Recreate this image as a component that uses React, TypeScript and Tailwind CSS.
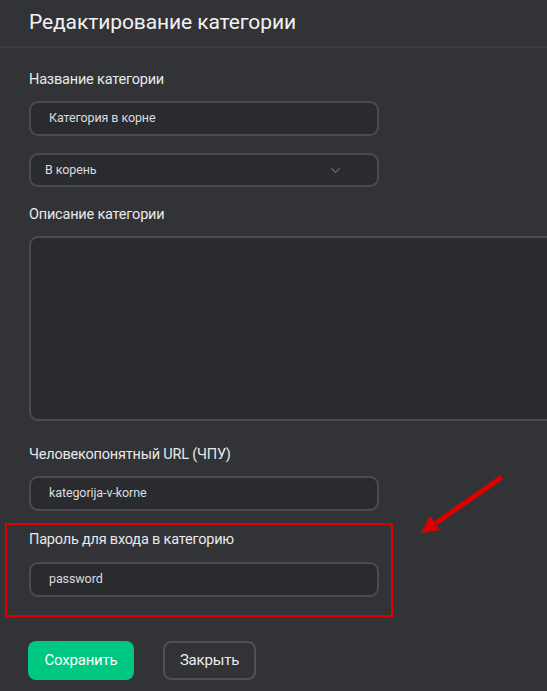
import { ChevronDown } from "lucide-react";

const font = { fontFamily: 'Roboto, "Noto Sans", sans-serif' };

function Label({ children, className = "" }: { children: React.ReactNode; className?: string }) {
    return <div className={`text-[14.5px] leading-[20px] tracking-[-0.2px] text-[#e9e9ea] ${className}`}>{children}</div>;
}

function TextInput({ value, className = "" }: { value: string; className?: string }) {
    return (
        <div
            className={`w-[350px] h-[35px] flex items-center pl-[18px] rounded-[9px] border-2 border-[#4b4c51] bg-[#2a2b2f] text-[12.5px] tracking-[-0.1px] text-[#dcdcde] ${className}`}
        >
            {value}
        </div>
    );
}

export default function App() {
    return (
        <div style={font} className="relative w-[547px] h-[691px] overflow-hidden bg-[#323337] flex flex-col">
            {/* Header */}
            <div className="h-[48px] shrink-0 border-b-2 border-[#3d3e43] px-[29px] flex items-center">
                <h1 className="text-[21px] leading-none tracking-[-0.1px] text-[#f2f2f3] -mt-[2px]">Редактирование категории</h1>
            </div>

            {/* Scrollable form */}
            <div className="h-[567px] shrink-0 overflow-hidden pl-[29px]">
                <Label className="mt-[22px]">Название категории</Label>
                <TextInput value="Категория в корне" className="mt-[11px]" />

                <div className="mt-[17px] w-[350px] h-[34px] flex items-center justify-between pl-[14px] pr-[34px] rounded-[9px] border-2 border-[#4b4c51] bg-[#2a2b2f] text-[12.5px] tracking-[-0.1px] text-[#dcdcde]">
                    <span>В корень</span>
                    <ChevronDown className="w-[15px] h-[15px] text-[#6c6d72]" strokeWidth={2} />
                </div>

                <Label className="mt-[18px]">Описание категории</Label>
                <div className="mt-[11px] w-[540px] h-[185px] rounded-[9px] border-2 border-[#4b4c51] bg-[#2a2b2f]" />

                <Label className="mt-[24px]">Человекопонятный URL (ЧПУ)</Label>
                <TextInput value="kategorija-v-korne" className="mt-[11px]" />

                <Label className="mt-[19px]">Пароль для входа в категорию</Label>
                <TextInput value="password" className="mt-[12px]" />

                <Label className="mt-[15px] text-[#9a9b9f]">Мета-теги категории</Label>
            </div>

            {/* Footer */}
            <div className="flex items-center gap-[29px] pl-[28px] mt-[26px]">
                <button className="w-[106px] h-[39px] rounded-[8px] bg-[#00c781] text-[15px] tracking-[-0.2px] text-white">
                    Сохранить
                </button>
                <button className="w-[93px] h-[39px] rounded-[8px] border-2 border-[#505156] text-[15px] tracking-[-0.2px] text-[#ececed]">
                    Закрыть
                </button>
            </div>

            {/* Annotation overlay */}
            <div className="absolute left-[5px] top-[523px] w-[388px] h-[94px] border-2 border-[#dd0000]" />
            <svg className="absolute left-0 top-0" width="547" height="691" viewBox="0 0 547 691">
                <line x1="502" y1="477" x2="436" y2="523" stroke="#dd0000" strokeWidth="5" />
                <polygon points="421,533 430,516 440,530" fill="#dd0000" />
            </svg>
        </div>
    );
}
